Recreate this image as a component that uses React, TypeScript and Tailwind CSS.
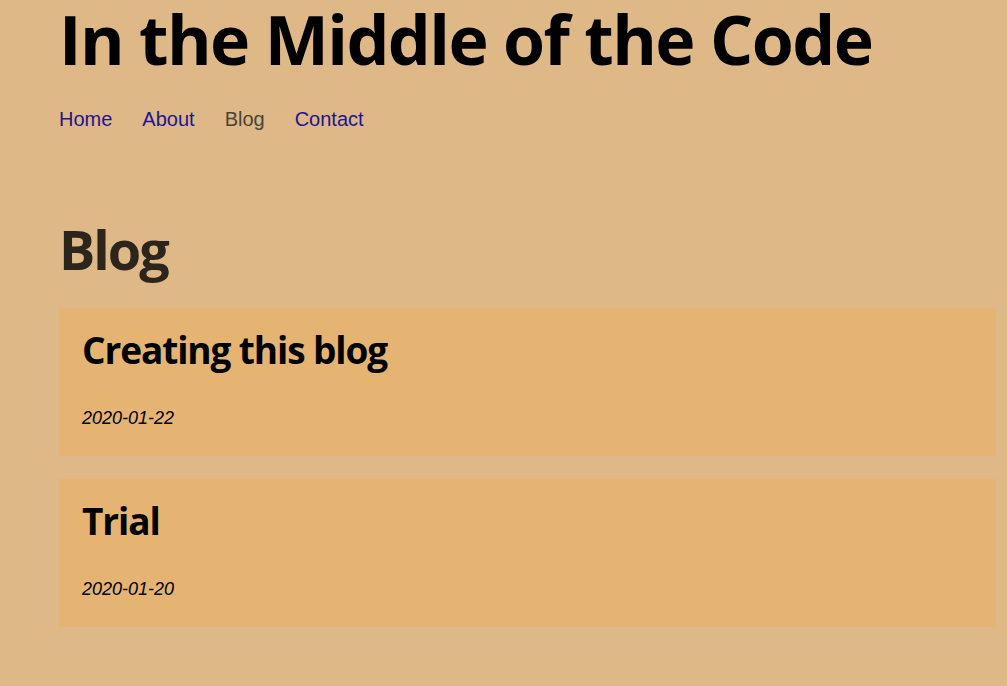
const POSTS = [
  { title: "Creating this blog", date: "2020-01-22" },
  { title: "Trial", date: "2020-01-20" },
];

const NAV = [
  { label: "Home", current: false },
  { label: "About", current: false },
  { label: "Blog", current: true },
  { label: "Contact", current: false },
];

export default function App() {
  return (
    <div className="min-h-[686px] bg-[#deb887] pl-[59px] pt-[2px] font-['Liberation_Sans',Arial,sans-serif]">
      <header>
        <h1 className="font-['Open_Sans',sans-serif] text-[68px] font-bold leading-[73px] tracking-[-1.6px] text-black">
          In the Middle of the Code
        </h1>
        <nav className="mt-[32px] flex gap-[30px] text-[20px] leading-[24px]">
          {NAV.map((n) =>
            n.current ? (
              <span key={n.label} className="text-[#4a4338]">
                {n.label}
              </span>
            ) : (
              <a key={n.label} href="#" className="text-[#1d1591]">
                {n.label}
              </a>
            )
          )}
        </nav>
      </header>

      <main className="mt-[86px] w-[937px]">
        <h2 className="font-['Open_Sans',sans-serif] text-[54px] font-bold leading-[64px] tracking-[-2px] text-[#2c251b]">
          Blog
        </h2>
        <div className="mt-[27px] flex flex-col gap-[23px]">
          {POSTS.map((p) => (
            <article key={p.title} className="h-[148px] bg-[#e5b472] px-[23px] pt-[19px]">
              <h3 className="font-['Open_Sans',sans-serif] text-[37px] font-bold leading-[46px] tracking-[-1.1px] text-black">
                {p.title}
              </h3>
              <p className="mt-[35px] text-[18px] italic leading-[20px] text-black">{p.date}</p>
            </article>
          ))}
        </div>
      </main>
    </div>
  );
}
